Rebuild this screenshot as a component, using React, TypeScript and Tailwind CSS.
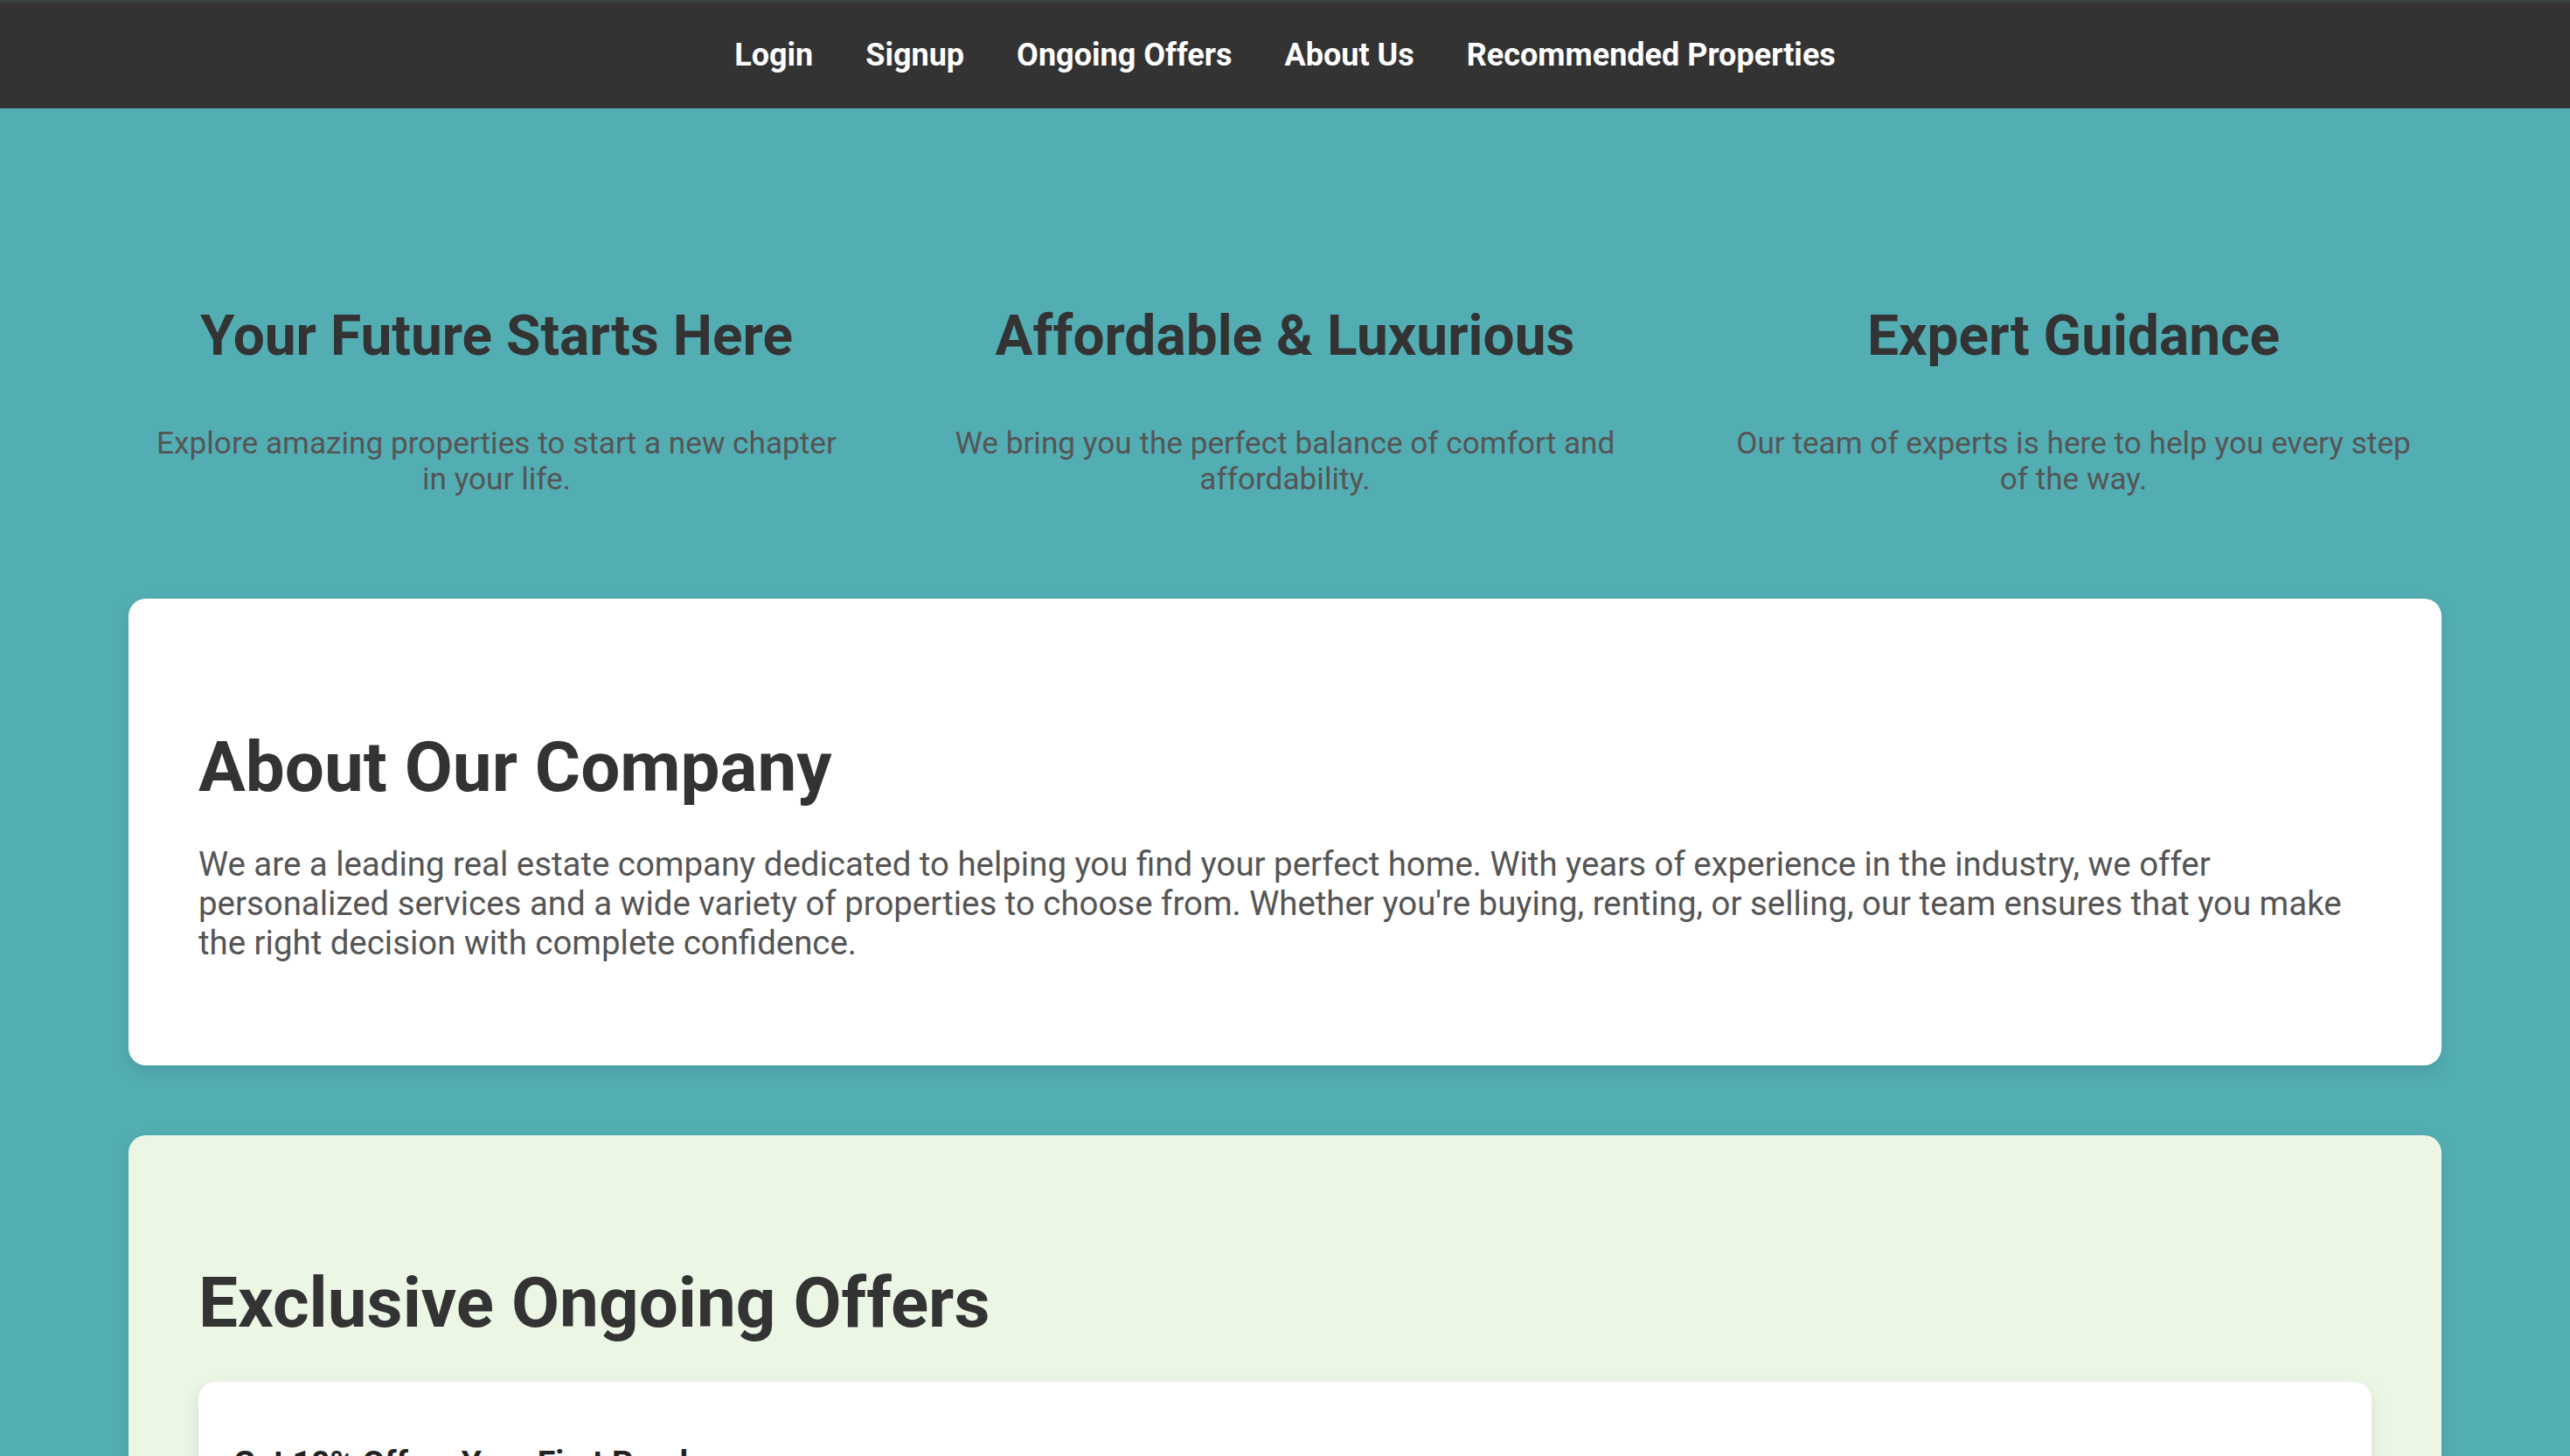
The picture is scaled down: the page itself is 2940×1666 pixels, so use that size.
const navLinks = ["Login", "Signup", "Ongoing Offers", "About Us", "Recommended Properties"];

const features = [
  {
    title: "Your Future Starts Here",
    text: "Explore amazing properties to start a new chapter in your life.",
  },
  {
    title: "Affordable & Luxurious",
    text: "We bring you the perfect balance of comfort and affordability.",
  },
  {
    title: "Expert Guidance",
    text: "Our team of experts is here to help you every step of the way.",
  },
];

const offers = [
  {
    title: "Get 10% Off on Your First Purchase",
    text: "Book your first property with us this month and enjoy an exclusive 10% discount on the listed price.",
  },
  {
    title: "Free Home Inspection",
    text: "Every purchase comes with a complimentary professional home inspection.",
  },
];

const App = () => {
  return (
    <div className="min-h-screen bg-[#53aeb4] font-['Roboto',sans-serif] text-[#333]">
      {/* top navigation */}
      <nav className="h-[124px] bg-[#333] border-t-[3px] border-[#3c4242] flex items-center justify-center gap-[60px]">
        {navLinks.map((link) => (
          <a key={link} href="#" className="text-white text-[36px] font-bold leading-none -mt-[2px]">
            {link}
          </a>
        ))}
      </nav>

      {/* hero features */}
      <section className="pt-[223px] pb-[116px]">
        <div className="w-[90%] mx-auto grid grid-cols-3 gap-[60px]">
          {features.map((f) => (
            <div key={f.title} className="px-5 text-center">
              <h2 className="text-[64px] font-bold leading-[75px] mb-[65px]">{f.title}</h2>
              <p className="text-[35.2px] leading-[41px] text-[#555]">{f.text}</p>
            </div>
          ))}
        </div>
      </section>

      <main className="w-[90%] mx-auto flex flex-col gap-[80px] pb-[80px]">
        {/* about */}
        <section className="bg-white rounded-[20px] shadow-[0_8px_20px_rgba(0,0,0,0.1)] px-[80px] pt-[146px] pb-[118px]">
          <h2 className="text-[80px] font-bold leading-[94px] mb-[41px]">About Our Company</h2>
          <p className="text-[38.4px] leading-[45px] text-[#555]">
            We are a leading real estate company dedicated to helping you find your perfect home. With years of
            experience in the industry, we offer personalized services and a wide variety of properties to choose
            from. Whether you're buying, renting, or selling, our team ensures that you make the right decision with
            complete confidence.
          </p>
        </section>

        {/* offers */}
        <section className="bg-[#ebf7e4] rounded-[20px] shadow-[0_8px_20px_rgba(0,0,0,0.1)] px-[80px] pt-[145px] pb-[80px]">
          <h2 className="text-[80px] font-bold leading-[94px] mb-[43px]">Exclusive Ongoing Offers</h2>
          <div className="flex flex-col gap-[40px]">
            {offers.map((o) => (
              <div
                key={o.title}
                className="bg-white rounded-[20px] shadow-[0_8px_20px_rgba(0,0,0,0.1)] px-10 pt-[70px] pb-10"
              >
                <h3 className="text-[37.4px] font-bold leading-[44px] text-[#222] mb-[37px]">{o.title}</h3>
                <p className="text-[35.2px] leading-[41px] text-[#555]">{o.text}</p>
              </div>
            ))}
          </div>
        </section>
      </main>
    </div>
  );
};

export default App;
